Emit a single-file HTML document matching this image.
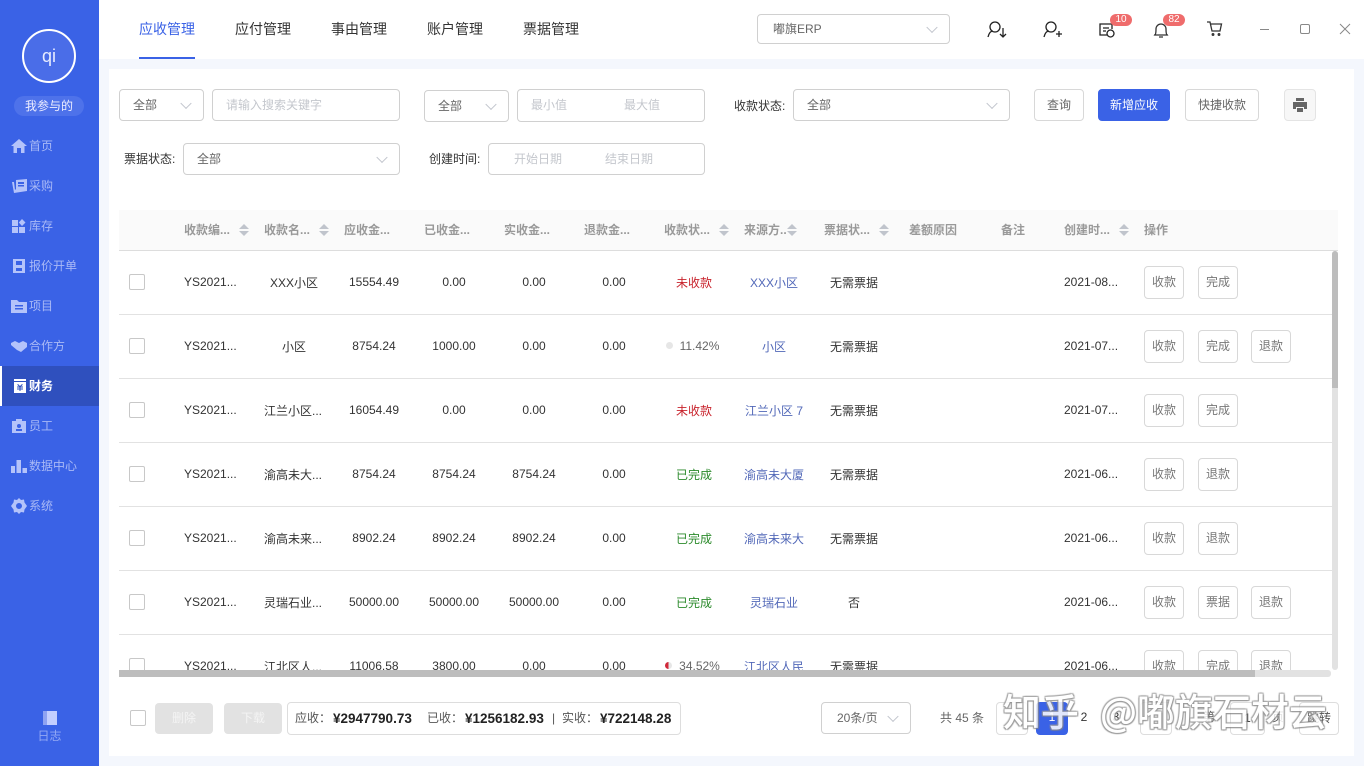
<!DOCTYPE html>
<html lang="zh"><head><meta charset="utf-8"><title>应收管理</title>
<style>
*{box-sizing:border-box}
html,body{margin:0;padding:0;width:1364px;height:766px;overflow:hidden;background:#f4f7fd;font:12px "Liberation Sans","Noto Sans CJK SC",sans-serif;color:#333}
.a{position:absolute}
#side{left:0;top:0;width:99px;height:766px;background:#3a62e6}
.av{left:22px;top:29px;width:54px;height:54px;border:2px solid #fff;border-radius:50%;background:#4a6de8;color:#e8ecff;font-size:18px;line-height:50px;text-align:center}
.mine{left:14px;top:96px;width:70px;height:20px;border-radius:10px;background:#4e72ea;color:#eef;line-height:20px;text-align:center}
.m{left:0;width:99px;height:40px;line-height:40px;color:#a9b9f6;padding-left:29px;white-space:nowrap}
.m svg{position:absolute;left:11px;top:12px;width:16px;height:16px;fill:#b4c3fa}
.m.on{background:#2f50be;color:#fff;font-weight:bold;border-left:2px solid #fff;padding-left:27px}
.m.on svg{left:10px;fill:#fff}
.log{left:0;top:711px;width:99px;text-align:center;color:#93a8f4;line-height:18px}
#top{left:99px;top:0;width:1265px;height:59px;background:#fff}
.tab{top:20px;font-size:14px;line-height:18px;color:#333}
.tabline{left:139px;top:57px;width:56px;height:2px;background:#3a62e6}
.b{border:1px solid #d0d0d0;border-radius:4px;background:#fff;position:absolute;line-height:30px;white-space:nowrap}
.sel{padding-left:13px;color:#666}
.sel:after{content:"";position:absolute;right:13px;top:50%;width:7px;height:7px;border-right:1px solid #c0c4cc;border-bottom:1px solid #c0c4cc;transform:translateY(-70%) rotate(45deg)}
.ph{color:#c4c7cd;position:absolute}
.lab{position:absolute;color:#333;line-height:16px}
.btn{text-align:center;color:#666;border-color:#d8d8d8}
#panel{left:109px;top:69px;width:1245px;height:687px;background:#fff}
#tw{left:119px;top:210px;width:1219px;height:460px;overflow:hidden}
table{border-collapse:collapse;table-layout:fixed;width:1219px}
th{height:40px;background:#fafafa;color:#999;font-weight:bold;text-align:left;padding:0 0 0 10px;border-bottom:1px solid #ddd;position:relative}
td{height:64px;padding:0 10px;text-align:center;border-bottom:1px solid #e2e2e2;white-space:nowrap;color:#333;overflow:hidden}
td:first-child{text-align:left}
td.l{text-align:left}
td.ops{text-align:left;padding:0 0 0 10px}
.o{display:inline-block;width:40px;height:33px;line-height:31px;border:1px solid #d8d8d8;border-radius:4px;text-align:center;color:#777;margin-right:14px;vertical-align:middle}
.o + .o{margin-right:13px}
.cb{display:inline-block;width:16px;height:16px;border:1px solid #c8c8c8;border-radius:2px;vertical-align:middle}
.red{color:#c8232c}.grn{color:#2b8a2b}.blu{color:#5268b8}.gry{color:#666}
.s{position:absolute;top:14px;width:10px;height:12px}
.s:before,.s:after{content:"";position:absolute;left:0;border-left:5px solid transparent;border-right:5px solid transparent}
.s:before{top:0;border-bottom:5px solid #c0c4cc}
.s:after{top:7px;border-top:5px solid #c0c4cc}
.pie{display:inline-block;width:7px;height:7px;border-radius:50%;margin:0 7px 0 -3px;vertical-align:1px}
.hs{left:119px;top:670px;width:1212px;height:7px;background:#e2e2e2;border-radius:0 3px 3px 0}
.hs i{position:absolute;left:0;top:0;width:1136px;height:7px;background:#bdbdbd}
.vs{left:1332px;top:251px;width:6px;height:419px;background:#e2e2e2;border-radius:3px}
.vs i{position:absolute;left:0;top:0;width:6px;height:137px;background:#bdbdbd;border-radius:3px 3px 0 0}
.dis{background:#e2e2e2;border-radius:4px;color:#f4f4f4;text-align:center;line-height:31px;height:31px;width:58px;top:703px}
.sum{left:287px;top:702px;width:394px;height:33px;line-height:31px;color:#555;font-size:12px;border-color:#ddd}
.sum span{position:absolute;top:0}
.sum b{position:absolute;top:0;color:#222;font-size:13.5px}
.pg{top:702px;height:33px;line-height:31px;border-color:#ddd;text-align:center}
.wm{top:682px;font-size:38px;line-height:56px;color:#fff;white-space:nowrap;text-shadow:1px 1px 1px #888,-1px -1px 1px #999,1px -1px 1px #999,-1px 1px 1px #888;opacity:.85;font-family:"Noto Sans CJK SC",sans-serif;font-weight:500}
</style></head><body>
<div class="a" id="side">
<div class="a av">qi</div><div class="a mine">我参与的</div>
<div class="a m" style="top:126px"><svg viewBox="0 0 16 16"><path d="M8 1 0 8h2.500v7H6v-5h4v5h3.500V8H16z"/></svg>首页</div>
<div class="a m" style="top:166px"><svg viewBox="0 0 16 16" style="left:12px"><path d="M0 4l2 11 13-2V1L4 2v9l-1 1-1-8zM6 4v2h6V4zM6 7v1.500h6V7z" fill-rule="evenodd"/></svg>采购</div>
<div class="a m" style="top:206px"><svg viewBox="0 0 16 16"><path d="M1 2h6v6H1zM1 9h6v6H1zM8 9h6v6H8zM11 1l3.500 3.500L11 8 7.800 4.500z"/></svg>库存</div>
<div class="a m" style="top:246px"><svg viewBox="0 0 16 16"><path d="M2 1h12v14H2zM5 3v4h6V3zM5 10v3h6v-3z" fill-rule="evenodd"/></svg>报价开单</div>
<div class="a m" style="top:286px"><svg viewBox="0 0 16 16"><path d="M0 2h6l2 2h8v11H0zM4 7v1.500h8V7zM4 10v1.500h8V10z" fill-rule="evenodd"/></svg>项目</div>
<div class="a m" style="top:326px"><svg viewBox="0 0 16 16"><path d="M0 5l4-2 4 2 4-2 4 2v4l-6 5-4-2-6-5z"/></svg>合作方</div>
<div class="a m on" style="top:366px"><svg viewBox="0 0 16 16"><path d="M2 1h12v2H2zM2 4h12v11H2zM6 6l2 2 2-2 .8.700L9 8.500h2v1H8.500v1H11v1H8.500V13h-1v-1.500H5v-1h2.500v-1H5v-1h2L5.200 6.700z" fill-rule="evenodd"/></svg>财务</div>
<div class="a m" style="top:406px"><svg viewBox="0 0 16 16"><path d="M1 3h4V1h6v2h4v12H1zM8 6a2 2 0 100 4 2 2 0 000-4zM5 11v2h6v-2z" fill-rule="evenodd"/></svg>员工</div>
<div class="a m" style="top:446px"><svg viewBox="0 0 16 16"><path d="M0 8h4v7H0zM5.500 2h4.500v13H5.500zM11.500 10H16v5h-4.500z"/></svg>数据中心</div>
<div class="a m" style="top:486px;padding-left:29px"><svg viewBox="0 0 16 16"><path d="M8 0l2 2 3-.500.500 3L16 8l-2.500 3.500-.500 3-3-.500-2 2-2-2-3 .500-.500-3L0 8l2.500-3.500.500-3 3 .500zM8 5a3 3 0 100 6 3 3 0 000-6z" fill-rule="evenodd"/></svg>系统</div>
<div class="a log"><svg width="14" height="14" viewBox="0 0 14 14" style="display:block;margin:0 auto 2px"><path d="M0 0h4v14H0z" fill="#8ea2f2"/><path d="M4 0h10v14H4z" fill="#c3ceff"/></svg>日志</div>
</div>

<div class="a" id="top"></div>
<div class="a tab" style="left:139px;color:#3a62e6">应收管理</div>
<div class="a tab" style="left:235px">应付管理</div>
<div class="a tab" style="left:331px">事由管理</div>
<div class="a tab" style="left:427px">账户管理</div>
<div class="a tab" style="left:523px">票据管理</div>
<div class="a tabline"></div>
<div class="b sel" style="left:757px;top:14px;width:193px;height:30px;line-height:28px;padding-left:15px">嘟旗ERP</div>
<svg class="a" style="left:985px;top:18px" width="24" height="22" viewBox="0 0 24 22" fill="none" stroke="#222" stroke-width="1.300"><circle cx="10" cy="9" r="5"/><path d="M3 19c1-4 3-6 5-6"/><path d="M18 10v9M15 16l3 3 3-3"/></svg>
<svg class="a" style="left:1041px;top:18px" width="24" height="22" viewBox="0 0 24 22" fill="none" stroke="#222" stroke-width="1.300"><circle cx="10" cy="9" r="5"/><path d="M3 19c1-4 3-6 5-6"/><path d="M15 16h6M18 13v6"/></svg>
<svg class="a" style="left:1097px;top:20px" width="20" height="20" viewBox="0 0 20 20" fill="none" stroke="#222" stroke-width="1.300"><path d="M10 15H3V4h12v5"/><path d="M6 8h6M6 11h3"/><circle cx="13.500" cy="13.500" r="3.500"/></svg>
<svg class="a" style="left:1152px;top:20px" width="18" height="20" viewBox="0 0 18 20" fill="none" stroke="#333" stroke-width="1.300"><path d="M3 15c1-1 1-3 1-6a5 5 0 0110 0c0 3 0 5 1 6zM2 15h14M7 17h4"/></svg>
<svg class="a" style="left:1205px;top:20px" width="20" height="18" viewBox="0 0 20 18" fill="none" stroke="#333" stroke-width="1.300"><path d="M2 2h3l2 9h8l1.500-7H6"/><circle cx="8" cy="14.500" r=".8"/><circle cx="14" cy="14.500" r=".8"/></svg>
<div class="a" style="left:1110px;top:14px;width:22px;height:12px;border-radius:6px;background:#ef6c6c;color:#fff;font-size:10px;line-height:12px;text-align:center">10</div>
<div class="a" style="left:1163px;top:14px;width:22px;height:12px;border-radius:6px;background:#ef6c6c;color:#fff;font-size:10px;line-height:12px;text-align:center">82</div>
<div class="a" style="left:1260px;top:29px;width:9px;height:1px;background:#888"></div>
<div class="a" style="left:1300px;top:24px;width:10px;height:10px;border:1px solid #888;border-radius:2px"></div>
<svg class="a" style="left:1339px;top:23px" width="12" height="12" viewBox="0 0 12 12" stroke="#888" fill="none"><path d="M1 1l10 10M11 1L1 11"/></svg>

<div class="a" id="panel"></div>
<div class="b sel" style="left:119px;top:89px;width:85px;height:32px">全部</div>
<div class="b" style="left:212px;top:89px;width:188px;height:32px"><span class="ph" style="left:13px">请输入搜索关键字</span></div>
<div class="b sel" style="left:424px;top:90px;width:85px;height:32px">全部</div>
<div class="b" style="left:517px;top:89px;width:188px;height:33px"><span class="ph" style="left:13px">最小值</span><span class="ph" style="left:106px">最大值</span></div>
<div class="lab" style="left:734px;top:98px">收款状态:</div>
<div class="b sel" style="left:793px;top:89px;width:217px;height:32px">全部</div>
<div class="b btn" style="left:1034px;top:89px;width:50px;height:32px">查询</div>
<div class="b" style="left:1098px;top:89px;width:72px;height:32px;background:#3a62e6;border-color:#3a62e6;color:#fff;text-align:center">新增应收</div>
<div class="b btn" style="left:1185px;top:89px;width:74px;height:32px">快捷收款</div>
<div class="b" style="left:1284px;top:89px;width:32px;height:32px;background:#f7f7f7;border-color:#e4e4e4"><svg class="a" style="left:7px;top:7px" width="16" height="16" viewBox="0 0 16 16" fill="#666"><path d="M4 1h8v3H4zM1 5h14v7h-3v-2H4v2H1zM5 11h6v4H5z"/></svg></div>
<div class="lab" style="left:124px;top:151px">票据状态:</div>
<div class="b sel" style="left:183px;top:143px;width:217px;height:32px">全部</div>
<div class="lab" style="left:429px;top:151px">创建时间:</div>
<div class="b" style="left:488px;top:143px;width:217px;height:32px"><span class="ph" style="left:25px">开始日期</span><span class="ph" style="left:116px">结束日期</span></div>

<div class="a" id="tw"><table>
<colgroup><col style="width:55px"><col style="width:80px"><col style="width:80px"><col style="width:80px"><col style="width:80px"><col style="width:80px"><col style="width:80px"><col style="width:80px"><col style="width:80px"><col style="width:80px"><col style="width:80px"><col style="width:80px"><col style="width:80px"><col style="width:204px"></colgroup>
<tr><th></th><th>收款编...<i class="s" style="left:65px"></i></th><th>收款名...<i class="s" style="left:65px"></i></th><th>应收金...</th><th>已收金...</th><th>实收金...</th><th>退款金...</th><th>收款状...<i class="s" style="left:65px"></i></th><th>来源方..<i class="s" style="left:53px"></i></th><th>票据状...<i class="s" style="left:65px"></i></th><th style="padding-left:15px">差额原因</th><th style="padding-left:27px">备注</th><th>创建时...<i class="s" style="left:65px"></i></th><th>操作</th></tr>
<tr><td><i class="cb"></i></td><td class="l">YS2021...</td><td>XXX小区</td><td>15554.49</td><td>0.00</td><td>0.00</td><td>0.00</td><td class="red">未收款</td><td class="blu">XXX小区</td><td>无需票据</td><td></td><td></td><td class="l">2021-08...</td><td class="ops"><span class="o">收款</span><span class="o">完成</span></td></tr>
<tr><td><i class="cb"></i></td><td class="l">YS2021...</td><td>小区</td><td>8754.24</td><td>1000.00</td><td>0.00</td><td>0.00</td><td class="gry"><i class="pie" style="background:#e6e6e6"></i>11.42%</td><td class="blu">小区</td><td>无需票据</td><td></td><td></td><td class="l">2021-07...</td><td class="ops"><span class="o">收款</span><span class="o">完成</span><span class="o">退款</span></td></tr>
<tr><td><i class="cb"></i></td><td class="l">YS2021...</td><td style="padding:0;text-align:left;padding-left:10px">江兰小区...</td><td>16054.49</td><td>0.00</td><td>0.00</td><td>0.00</td><td class="red">未收款</td><td class="blu">江兰小区 7</td><td>无需票据</td><td></td><td></td><td class="l">2021-07...</td><td class="ops"><span class="o">收款</span><span class="o">完成</span></td></tr>
<tr><td><i class="cb"></i></td><td class="l">YS2021...</td><td class="l">渝高未大...</td><td>8754.24</td><td>8754.24</td><td>8754.24</td><td>0.00</td><td class="grn">已完成</td><td class="blu">渝高未大厦</td><td>无需票据</td><td></td><td></td><td class="l">2021-06...</td><td class="ops"><span class="o">收款</span><span class="o">退款</span></td></tr>
<tr><td><i class="cb"></i></td><td class="l">YS2021...</td><td class="l">渝高未来...</td><td>8902.24</td><td>8902.24</td><td>8902.24</td><td>0.00</td><td class="grn">已完成</td><td class="blu">渝高未来大</td><td>无需票据</td><td></td><td></td><td class="l">2021-06...</td><td class="ops"><span class="o">收款</span><span class="o">退款</span></td></tr>
<tr><td><i class="cb"></i></td><td class="l">YS2021...</td><td class="l">灵瑞石业...</td><td>50000.00</td><td>50000.00</td><td>50000.00</td><td>0.00</td><td class="grn">已完成</td><td class="blu">灵瑞石业</td><td>否</td><td></td><td></td><td class="l">2021-06...</td><td class="ops"><span class="o">收款</span><span class="o">票据</span><span class="o">退款</span></td></tr>
<tr><td><i class="cb"></i></td><td class="l">YS2021...</td><td class="l">江北区人...</td><td>11006.58</td><td>3800.00</td><td>0.00</td><td>0.00</td><td class="gry"><i class="pie" style="background:linear-gradient(90deg,#d0283a 50%,#e6e6e6 50%)"></i>34.52%</td><td class="blu">江北区人民</td><td>无需票据</td><td></td><td></td><td class="l">2021-06...</td><td class="ops"><span class="o">收款</span><span class="o">完成</span><span class="o">退款</span></td></tr>
</table></div>
<div class="a hs"><i></i></div>
<div class="a vs"><i></i></div>

<div class="a cb" style="left:130px;top:710px;width:16px;height:16px"></div>
<div class="a dis" style="left:155px">删除</div>
<div class="a dis" style="left:224px">下载</div>
<div class="b sum"><span style="left:7px">应收：</span><b style="left:45px">¥2947790.73</b><span style="left:139px">已收：</span><b style="left:177px">¥1256182.93</b><span style="left:264px">|</span><span style="left:274px">实收：</span><b style="left:312px">¥722148.28</b></div>
<div class="b sel" style="left:821px;top:702px;width:90px;height:32px;padding-left:15px">20条/页</div>
<div class="a" style="left:940px;top:710px;color:#666;line-height:17px">共 45 条</div>
<div class="b pg" style="left:996px;width:32px"></div>
<div class="a pg" style="left:1036px;width:32px;background:#3a62e6;border-radius:4px;color:#fff">1</div>
<div class="a pg" style="left:1068px;width:32px;color:#333">2</div>
<div class="a pg" style="left:1100px;width:32px;color:#333">3</div>
<div class="b pg" style="left:1140px;width:32px"></div>
<div class="a pg" style="left:1197px;width:24px;color:#555">第</div>
<div class="b pg" style="left:1230px;width:35px">1</div>
<div class="a pg" style="left:1266px;width:24px;color:#555">页</div>
<div class="b pg" style="left:1299px;width:40px;color:#555">跳转</div>
<div class="a wm" style="left:1003px">知乎</div>
<div class="a wm" style="left:1100px">@嘟旗石材云</div>
</body></html>
